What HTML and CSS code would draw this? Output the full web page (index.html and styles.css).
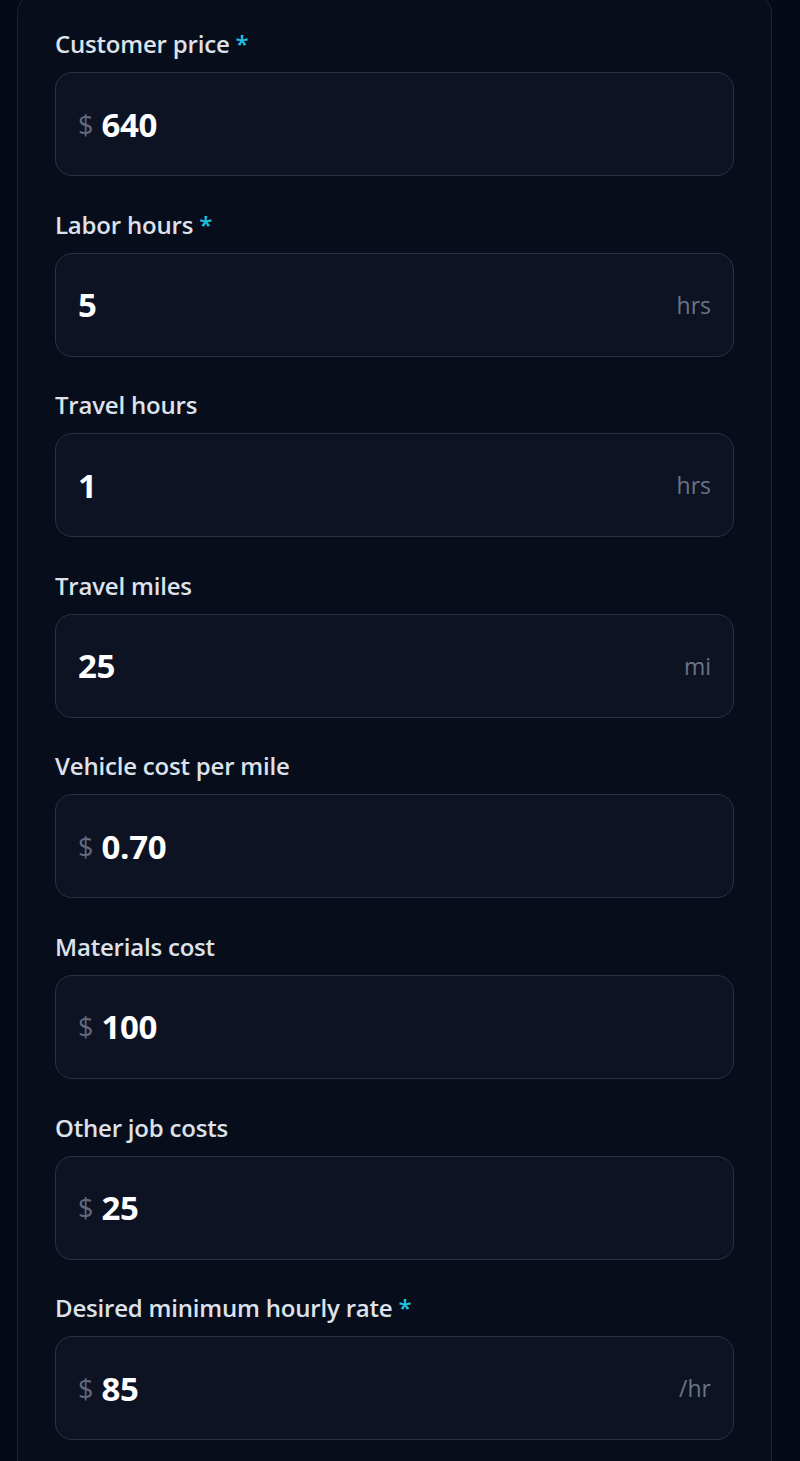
FILE: index.html
```html
<!DOCTYPE html>
<html lang="en">
<head>
<meta charset="utf-8">
<title>Job calculator</title>
<link rel="stylesheet" href="styles.css">
</head>
<body>
<div class="page">
  <form class="card">
    <div class="field">
      <label class="label">Customer price <span class="req">*</span></label>
      <div class="input"><span class="prefix">$</span><span class="value">640</span></div>
    </div>
    <div class="field">
      <label class="label">Labor hours <span class="req">*</span></label>
      <div class="input"><span class="value">5</span><span class="suffix">hrs</span></div>
    </div>
    <div class="field">
      <label class="label">Travel hours</label>
      <div class="input"><span class="value">1</span><span class="suffix">hrs</span></div>
    </div>
    <div class="field">
      <label class="label">Travel miles</label>
      <div class="input"><span class="value">25</span><span class="suffix">mi</span></div>
    </div>
    <div class="field">
      <label class="label">Vehicle cost per mile</label>
      <div class="input"><span class="prefix">$</span><span class="value">0.70</span></div>
    </div>
    <div class="field">
      <label class="label">Materials cost</label>
      <div class="input"><span class="prefix">$</span><span class="value">100</span></div>
    </div>
    <div class="field">
      <label class="label">Other job costs</label>
      <div class="input"><span class="prefix">$</span><span class="value">25</span></div>
    </div>
    <div class="field">
      <label class="label">Desired minimum hourly rate <span class="req">*</span></label>
      <div class="input"><span class="prefix">$</span><span class="value">85</span><span class="suffix">/hr</span></div>
    </div>
  </form>
</div>
</body>
</html>
```

FILE: styles.css
```css
html, body {
  margin: 0;
  padding: 0;
  background: #050a17;
  height: 1461px;
  overflow: hidden;
}

body {
  font-family: "Open Sans", "Noto Sans", sans-serif;
  color: #e2e6ee;
}

.page {
  padding: 0 28px 0 17px;
}

.card {
  margin-top: -7px;
  background: #080d1c;
  border: 1px solid #1c2333;
  border-radius: 20px;
  padding: 35px 37px 60px 37px;
  display: flex;
  flex-direction: column;
  gap: 33.6px;
}

.field {
  display: flex;
  flex-direction: column;
  gap: 13px;
}

.label {
  font-size: 24px;
  line-height: 30px;
  font-weight: 600;
  color: #dde2ea;
  letter-spacing: -0.2px;
}

.req {
  color: #1ec3df;
}

.input {
  box-sizing: border-box;
  height: 104px;
  background: #0d1323;
  border: 1px solid #283244;
  border-radius: 17px;
  padding: 0 22px;
  display: flex;
  align-items: center;
}

.prefix {
  font-size: 27px;
  color: #5f6a7e;
  margin-right: 8px;
}

.value {
  font-size: 33px;
  font-weight: 700;
  color: #ffffff;
  flex: 1;
  letter-spacing: -0.3px;
}

.suffix {
  font-size: 23px;
  color: #6a7488;
}
```
